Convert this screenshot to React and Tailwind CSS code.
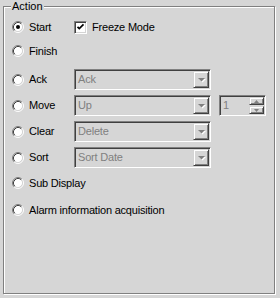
import React from 'react';

const font = { fontFamily: '"Liberation Sans", Arial, sans-serif' };

const Radio = ({ checked }) => (
    <svg width="12" height="12" viewBox="0 0 12 12" className="shrink-0">
        <circle cx="6" cy="6" r="4.5" fill="#ffffff" />
        <path d="M2.11 9.89 A5.5 5.5 0 0 1 9.89 2.11" fill="none" stroke="#808080" strokeWidth="1" />
        <path d="M9.89 2.11 A5.5 5.5 0 0 1 2.11 9.89" fill="none" stroke="#ffffff" strokeWidth="1" />
        <path d="M2.82 9.18 A4.5 4.5 0 0 1 9.18 2.82" fill="none" stroke="#404040" strokeWidth="1" />
        <path d="M9.18 2.82 A4.5 4.5 0 0 1 2.82 9.18" fill="none" stroke="#d4d4d4" strokeWidth="1" />
        {checked && <circle cx="6" cy="6" r="2" fill="#000000" />}
    </svg>
);

const RadioLabel = ({ label, checked, wide }) => (
    <div className={`flex items-center shrink-0 ${wide ? '' : 'w-[62px]'}`}>
        <Radio checked={checked} />
        <span className="ml-[5px] text-[11px] leading-[13px] tracking-[-0.2px] text-black whitespace-nowrap">{label}</span>
    </div>
);

const Arrow = () => (
    <svg width="9" height="6" viewBox="0 0 9 6">
        <path d="M2 2 L9 2 L5.5 5.5 Z" fill="#ffffff" />
        <path d="M1 1 L8 1 L4.5 4.5 Z" fill="#808080" />
    </svg>
);

const Combo = ({ value }) => (
    <div className="w-[137px] h-[21px] flex border border-t-[#808080] border-l-[#808080] border-b-white border-r-white shadow-[inset_1px_1px_0_#404040,inset_-1px_-1px_0_#d4d4d4] p-[1px]">
        <div className="flex-1 flex items-center pl-[2px] text-[11px] tracking-[-0.2px] text-[#808080] whitespace-nowrap">{value}</div>
        <div className="w-[16px] h-[17px] flex items-center justify-center border border-t-[#d4d4d4] border-l-[#d4d4d4] border-b-[#404040] border-r-[#404040] shadow-[inset_1px_1px_0_#fff,inset_-1px_-1px_0_#808080]">
            <Arrow />
        </div>
    </div>
);

const SpinBtn = ({ up }) => (
    <div className="w-[15px] h-[8px] flex items-center justify-center border border-t-[#d4d4d4] border-l-[#d4d4d4] border-b-[#404040] border-r-[#404040] shadow-[inset_1px_1px_0_#fff,inset_-1px_-1px_0_#808080]">
        <svg width="5" height="3" viewBox="0 0 5 3">
            {up ? <path d="M0 3 L5 3 L2.5 0 Z" fill="#808080" /> : <path d="M0 0 L5 0 L2.5 3 Z" fill="#808080" />}
        </svg>
    </div>
);

const Spinner = () => (
    <div className="ml-[8px] w-[47px] h-[21px] flex border border-t-[#808080] border-l-[#808080] border-b-white border-r-white shadow-[inset_1px_1px_0_#404040,inset_-1px_-1px_0_#d4d4d4] p-[1px]">
        <div className="flex-1 flex items-center pl-[2px] text-[11px] text-[#808080]">1</div>
        <div className="flex flex-col justify-center gap-[1px]">
            <SpinBtn up />
            <SpinBtn />
        </div>
    </div>
);

const App = () => {
    return (
        <div className="w-[280px] h-[298px] bg-[#d6d6d6] pt-[6px] pl-[3px] overflow-hidden" style={font}>
            <div className="relative w-[272px] h-[288px] border border-[#808080] shadow-[inset_1px_1px_0_#fff,1px_1px_0_#fff] pt-[10px] pl-[8px]">
                {/* group title */}
                <div className="absolute top-[-7px] left-[7px] px-[1px] bg-[#d6d6d6] text-[11px] leading-[13px] text-black">
                    Action
                </div>

                <div className="flex items-center h-[20px]">
                    <RadioLabel label="Start" checked />
                    <div className="flex items-center">
                        <div className="w-[13px] h-[13px] bg-white border border-t-[#808080] border-l-[#808080] border-b-white border-r-white shadow-[inset_1px_1px_0_#404040,inset_-1px_-1px_0_#d4d4d4] flex items-center justify-center">
                            <svg width="9" height="9" viewBox="0 0 9 9">
                                <path d="M1.5 3.8 L3.3 5.6 L7.5 1.4" fill="none" stroke="#000" strokeWidth="1.7" />
                            </svg>
                        </div>
                        <span className="ml-[5px] text-[11px] leading-[13px] tracking-[-0.2px] text-black">Freeze Mode</span>
                    </div>
                </div>

                <div className="flex items-center h-[20px] mt-[4px]">
                    <RadioLabel label="Finish" />
                </div>

                <div className="flex items-center h-[21px] mt-[8px]">
                    <RadioLabel label="Ack" />
                    <Combo value="Ack" />
                </div>

                <div className="flex items-center h-[21px] mt-[5px]">
                    <RadioLabel label="Move" />
                    <Combo value="Up" />
                    <Spinner />
                </div>

                <div className="flex items-center h-[21px] mt-[5px]">
                    <RadioLabel label="Clear" />
                    <Combo value="Delete" />
                </div>

                <div className="flex items-center h-[21px] mt-[5px]">
                    <RadioLabel label="Sort" />
                    <Combo value="Sort Date" />
                </div>

                <div className="flex items-center h-[20px] mt-[5px]">
                    <RadioLabel label="Sub Display" wide />
                </div>

                <div className="flex items-center h-[20px] mt-[7px]">
                    <RadioLabel label="Alarm information acquisition" wide />
                </div>
            </div>
        </div>
    );
};

export default App;
